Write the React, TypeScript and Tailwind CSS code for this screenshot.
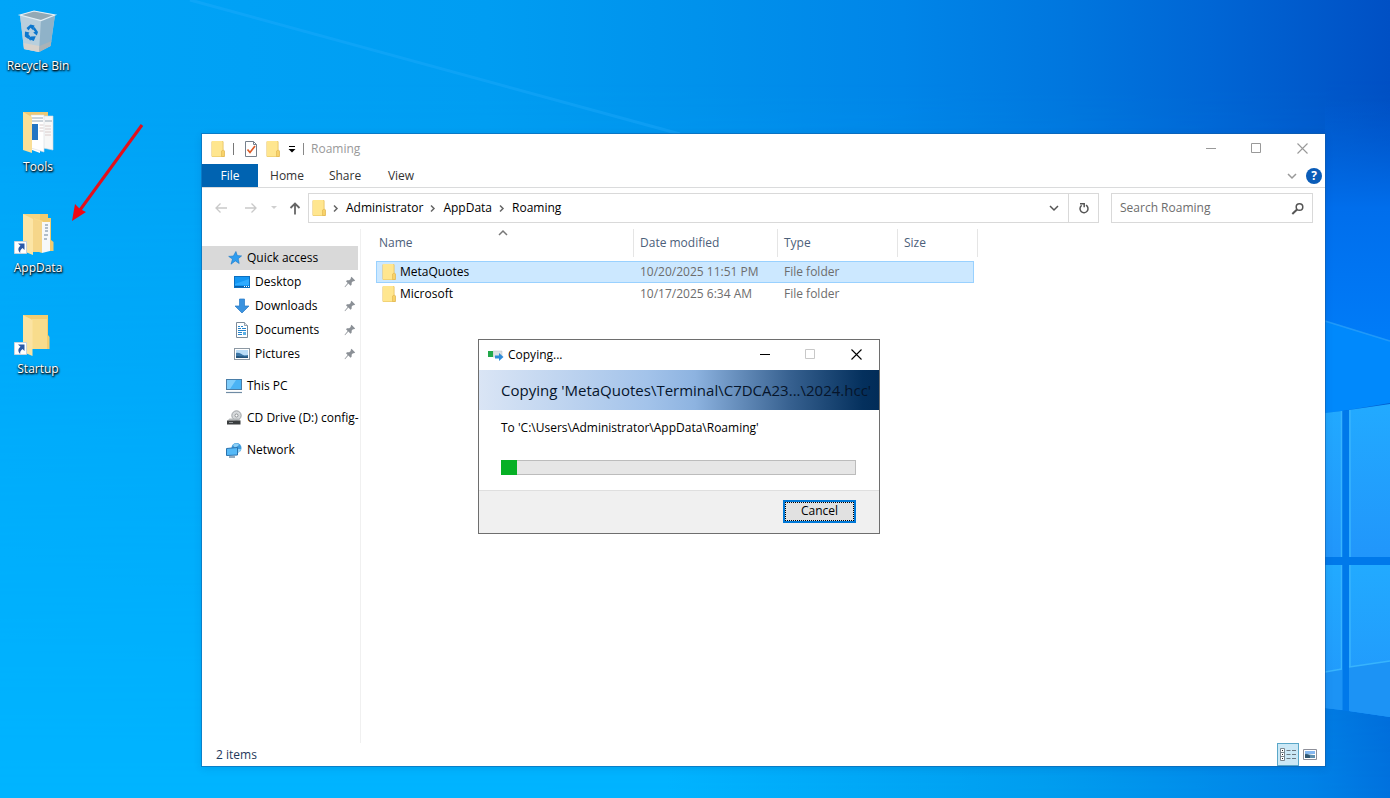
import React, { useState } from 'react';

const font = "font-['Open_Sans','Noto_Sans',sans-serif]";

const FolderIcon = () => (
  <svg width="14" height="18" viewBox="0 0 14 18" className="shrink-0">
    <path d="M1 1.500h11v9l1 1v5H1z" fill="#fbdd7c" stroke="#e6bf5c" />
    <path d="M1 1h10.500v15.500H1z" fill="#ffe68f" />
    <path d="M10.500 16.500V11l2-1 1 1v5.500z" fill="#f8d269" stroke="#dfb450" strokeWidth=".6" />
  </svg>
);

const PinIcon = () => (
  <svg width="12" height="12" viewBox="0 0 12 12" className="shrink-0">
    <path d="M7.500.8 11.200 4.500 10 5.300 9 5.200 7.700 6.600 7.600 8.800 6.500 9.700 4.400 7.600 1 11.200 .6 10.800 3.700 6.900 2 5.200 3 4.300 5.200 4.200 6.700 3 6.700 1.900z" fill="#8b9096" />
  </svg>
);

const StarIcon = () => (
  <svg width="16" height="16" viewBox="0 0 16 16">
    <path d="M8.900 1.500 10.300 5.600 14.600 5.900 11.200 8.700 12.200 13.500 8.300 10.900 4 14.200 5.500 9 1.700 6.400 6.400 6z" fill="#2e9df0" stroke="#1577c8" strokeWidth=".6" />
  </svg>
);

const DesktopIcon = () => (
  <svg width="16" height="16" viewBox="0 0 16 16">
    <rect x=".5" y="2.500" width="15" height="11" fill="#1497f3" stroke="#0b6fc0" />
    <path d="M1 10 15 5v6H1z" fill="#2fabff" />
    <path d="M1 12h14v1H1z" fill="#0a5ea8" />
    <path d="M10 12.500h1m1 0h1m1 0h1" stroke="#fff" strokeWidth="1" />
  </svg>
);

const DownloadsIcon = () => (
  <svg width="16" height="16" viewBox="0 0 16 16">
    <path d="M5.500 1h5v7H15l-7 7-7-7h4.500z" fill="#3b93df" stroke="#2579c5" strokeWidth=".7" />
  </svg>
);

const DocumentsIcon = () => (
  <svg width="16" height="16" viewBox="0 0 16 16">
    <path d="M2.500.5h8l3 3v12h-11z" fill="#fff" stroke="#7c8b99" />
    <path d="M10.500.5v3h3" fill="#dfe6ec" stroke="#7c8b99" strokeWidth=".8" />
    <path d="M4 4.500h2m1 0h2M4 6.500h3m1 0h4M4 8.500h8M4 10.500h4M4 12.500h4" stroke="#2583cb" />
    <path d="M9 10h3v3H9z" fill="#5bb0e6" />
  </svg>
);

const PicturesIcon = () => (
  <svg width="16" height="16" viewBox="0 0 16 16">
    <rect x=".5" y="2.500" width="15" height="11" fill="#fff" stroke="#8c98a3" />
    <path d="M2 4h12v8H2z" fill="#b9dcf7" />
    <path d="M2 7c3-1 5 1 7 2s4 0 5 0v3H2z" fill="#3e78a8" />
    <path d="M2 10c3 0 6 .5 12 .5V12H2z" fill="#23547c" />
  </svg>
);

const ComputerIcon = () => (
  <svg width="16" height="16" viewBox="0 0 16 16">
    <rect x=".5" y="1.500" width="15" height="10" fill="#4bb3f5" stroke="#4a7ea8" />
    <path d="M1 2h9L4 11H1z" fill="#7fcdfb" />
    <path d="M0 14.500h16" stroke="#6f8ba4" strokeWidth="1.200" />
  </svg>
);

const DiscDriveIcon = () => (
  <svg width="16" height="16" viewBox="0 0 16 16">
    <circle cx="10.500" cy="5.500" r="4.700" fill="#d6d9db" stroke="#8d9295" strokeWidth=".8" />
    <circle cx="10.500" cy="5.500" r="1.500" fill="#fff" stroke="#84898c" strokeWidth=".9" />
    <path d="M3.500 8.500h9l2 2H1.500z" fill="#b4b8ba" />
    <path d="M1 10.500h13.500v4H1z" fill="#3a3d3f" />
    <path d="M3 12.500h4" stroke="#a6abad" strokeWidth=".8" />
  </svg>
);

const NetworkIcon = () => (
  <svg width="16" height="16" viewBox="0 0 16 16">
    <circle cx="10.500" cy="6" r="5" fill="#3f9bdc" />
    <path d="M7 3c2-2 5-2 6 0L9 6zM12 7l3 0-1 3-2 0z" fill="#8fd0f5" />
    <path d="M.5 6.500 11.500 5.500V13L.5 13.500z" fill="#55b9f7" stroke="#2a72ae" />
    <path d="M3 15h6" stroke="#4b7598" strokeWidth="1.200" />
  </svg>
);

const CheckPageIcon = () => (
  <svg width="14" height="16" viewBox="0 0 14 16" className="shrink-0">
    <path d="M1.500.5h8l3 3v12h-11z" fill="#fff" stroke="#76808c" />
    <path d="M9.500.5v3h3" fill="none" stroke="#76808c" />
    <path d="m3.500 8.500 2.500 3 5-6.500" fill="none" stroke="#dd5a26" strokeWidth="1.700" />
  </svg>
);

const Chevron = ({ className }: { className?: string }) => (
  <svg width="12" height="12" viewBox="0 0 12 12" fill="none" stroke="currentColor" strokeWidth="1.500" className={className}>
    <path d="m2 4 4 4 4-4" />
  </svg>
);

const CrumbArrow = () => (
  <svg width="12" height="12" viewBox="0 0 12 12" fill="none" stroke="#666" strokeWidth="1.500" className="mx-1 shrink-0">
    <path d="m4 3.500 3 3-3 3" />
  </svg>
);

const RecycleBin = () => (
  <svg width="42" height="44" viewBox="0 0 42 44">
    <path d="M3 6 17 2l21 4-4.500 31L22 43 7 40z" fill="#b6cddb" />
    <path d="M3 6 24 11.500 22 43 7 40z" fill="#b9cfdd" />
    <path d="M24 11.500 38 6l-4.500 31L22 43z" fill="#8fb2c8" />
    <path d="M3 6 17 2l21 4-14 5.500z" fill="#93a9b5" stroke="#e4eff5" strokeWidth="1.200" />
    <path d="M6.500 34 22.500 37 22 43 7 40z" fill="#d8d2cc" />
    <path d="m22.500 37 12-5-1 5L22 43z" fill="#a9b3b8" />
    <g fill="#0c77ce">
      <path d="m9.500 19 4-3.500 4 1-1.500 4.500-2.500-2.200-2 2.700z" />
      <path d="m17.500 18 3.500 5-1.200 3.500-3.600-3 1.800-.8-2.200-2.600z" />
      <path d="M8 22.500l4.500 1-1.200 1.400 2 2.600-2 2.500-3.500-2.500z" />
      <path d="m14 27.500 4.800-.2-2 4.700-3.300-1.200-.2 1.200-2-3z" />
    </g>
  </svg>
);

const ShortcutBadge = () => (
  <g>
    <path d="M.5 30.500h12v12H.5z" fill="#fff" stroke="#c9d3dc" />
    <path d="M4 32.500h6.500V39L8.500 37C6.500 38.500 6 40 6.200 42 3.500 39.500 4 36.500 6.500 34.800z" fill="#2c5aa8" />
  </g>
);

const ToolsFolder = () => (
  <svg width="48" height="44" viewBox="0 0 48 44">
    <path d="M9 2h25v34H9z" fill="#eec973" />
    <path d="M18 9 26 12v31l-8-3z" fill="#fff" />
    <path d="M29 6h10v34l-10-2z" fill="#f7f7f7" stroke="#d2d8dd" strokeWidth=".6" />
    <path d="M17 5h13v37l-13-4z" fill="#fff" stroke="#d7dbe0" strokeWidth=".6" />
    <path d="M18 8h11M18 11h11M31 11h7" stroke="#8d9eae" strokeWidth=".9" />
    <path d="M18 14h6v16h-6z" fill="#2375c4" />
    <path d="M25.500 15h4M25.500 18h4M25.500 21h4M31 16h6M31 19h6M31 22h6M31 25h6" stroke="#d5c6c6" strokeWidth=".9" />
    <path d="M9 2l9 5v36l-9-3z" fill="#fadf97" />
  </svg>
);

const AppDataFolder = () => (
  <svg width="48" height="44" viewBox="0 0 48 44">
    <path d="M9 3h25v4h3v22l2.500 2v9H22z" fill="#f1cb6e" />
    <path d="M9 3h17v38H9z" fill="#f5d583" />
    <path d="M20 7l9 3v31l-9-2z" fill="#f8da8b" />
    <path d="M28 11h8v29l-8 2z" fill="#f6f8fa" />
    <path d="M31 14h3M31 17h3M31 20h3M30 24h4M30 28h3" stroke="#6c8197" strokeWidth="1.200" />
    <path d="M9 3l10 5v36l-10-4z" fill="#fce5a6" />
    <path d="M19 8l9 3v31l-9-3z" fill="#f6d68a" />
    <ShortcutBadge />
  </svg>
);

const StartupFolder = () => (
  <svg width="48" height="44" viewBox="0 0 48 44">
    <path d="M9 3h25v20l1.500 2v12H18z" fill="#f3cd70" />
    <path d="M18 7h15v30H18z" fill="#f8dc8c" />
    <path d="M9 3l9.500 5v36L9 40z" fill="#fbe3a2" />
    <ShortcutBadge />
  </svg>
);

const desktopIcons = [
  { label: 'Recycle Bin', icon: RecycleBin },
  { label: 'Tools', icon: ToolsFolder },
  { label: 'AppData', icon: AppDataFolder },
  { label: 'Startup', icon: StartupFolder },
];

const quickLinks = [
  { label: 'Desktop', icon: DesktopIcon },
  { label: 'Downloads', icon: DownloadsIcon },
  { label: 'Documents', icon: DocumentsIcon },
  { label: 'Pictures', icon: PicturesIcon },
];

const places = [
  { label: 'This PC', icon: ComputerIcon },
  { label: 'CD Drive (D:) config-', icon: DiscDriveIcon },
  { label: 'Network', icon: NetworkIcon },
];

const files = [
  { name: 'MetaQuotes', date: '10/20/2025 11:51 PM', type: 'File folder' },
  { name: 'Microsoft', date: '10/17/2025 6:34 AM', type: 'File folder' },
];

const WindowButtons = ({ disabledMax = false }: { disabledMax?: boolean }) => (
  <div className="flex h-[28px] shrink-0 self-start">
    <button aria-label="Minimize" className="flex w-[46px] items-center justify-center">
      <svg width="11" height="11" viewBox="0 0 11 11"><path d="M0 5.500h10" stroke="currentColor" /></svg>
    </button>
    <button aria-label="Maximize" disabled={disabledMax} className={`flex w-[45px] items-center justify-center ${disabledMax ? 'text-[#c8c8c8]' : ''}`}>
      <svg width="11" height="11" viewBox="0 0 11 11"><path d="M.5.5h9v9h-9z" fill="none" stroke="currentColor" /></svg>
    </button>
    <button aria-label="Close" className="flex w-[46px] items-center justify-center">
      <svg width="11" height="11" viewBox="0 0 11 11"><path d="m.5.5 10 10M10.500.5l-10 10" stroke="currentColor" strokeWidth="1.100" /></svg>
    </button>
  </div>
);

const Wallpaper = () => (
  <svg className="absolute inset-0 h-full w-full" viewBox="0 0 1390 798" preserveAspectRatio="none">
    <defs>
      <linearGradient id="top" x1="0" x2="1">
        <stop offset="0" stopColor="#00a5f8" />
        <stop offset=".35" stopColor="#009df2" />
        <stop offset=".5" stopColor="#0092ec" />
        <stop offset=".65" stopColor="#0085e8" />
        <stop offset=".77" stopColor="#0076de" />
        <stop offset=".87" stopColor="#0066d5" />
        <stop offset="1" stopColor="#0050c4" />
      </linearGradient>
      <linearGradient id="bottom" x1="0" x2="1">
        <stop offset="0" stopColor="#00b4ff" />
        <stop offset=".48" stopColor="#00b4ff" />
        <stop offset=".75" stopColor="#009eef" />
        <stop offset=".94" stopColor="#0084e8" />
        <stop offset="1" stopColor="#0072de" />
      </linearGradient>
      <linearGradient id="fade" x1="0" x2="0" y1="0" y2="1">
        <stop offset=".1" stopColor="#fff" stopOpacity="0" />
        <stop offset="1" stopColor="#fff" />
      </linearGradient>
      <linearGradient id="pane" x1="0" x2="0" y1="0" y2="1">
        <stop offset="0" stopColor="#22aaff" />
        <stop offset="1" stopColor="#2196fb" />
      </linearGradient>
      <linearGradient id="glow" x1="0" x2="0" y1="0" y2="1">
        <stop offset="0" stopColor="#0062dc" stopOpacity="0" />
        <stop offset=".45" stopColor="#006eec" />
        <stop offset="1" stopColor="#007cf8" />
      </linearGradient>
      <mask id="lower"><path d="M0 0h1390v798H0z" fill="url(#fade)" /></mask>
    </defs>
    <path d="M0 0h1390v798H0z" fill="url(#top)" />
    <path d="M0 0h1390v798H0z" fill="url(#bottom)" mask="url(#lower)" />
    <path d="m190 0 490 134" stroke="#2bb0ff" strokeWidth="3" opacity=".3" />
    <path d="M1325 100h65v241l-65-20z" fill="url(#glow)" />
    <path d="m1325 321 65 20v62l-65 11z" fill="#0089fc" />
    <path d="m1325 321 65 20" stroke="#2fa5fb" strokeWidth="1.500" opacity=".7" />
    <path d="m1325 413 65-8v312l-65-9z" fill="#0079ea" />
    <path d="m1325 413 17-2v146h-17zM1349 410l41-6v153h-41z" fill="url(#pane)" />
    <path d="M1325 565h17v145l-17-2zM1349 565h41v152l-41-6z" fill="url(#pane)" />
    <path d="M1341.500 411v146M1350 410v147M1341.500 565v145M1350 565v146" stroke="#38b4fd" strokeWidth="1.500" />
    <path d="m1325 672 17-3v41l-17-2zM1349 667l41-6v56l-41-6z" fill="#1c93f5" />
    <path d="m1325 672 17-3M1349 667l41-6" stroke="#38b4fd" strokeWidth="1.500" />
  </svg>
);

const Explorer = () => {
  const [selected, setSelected] = useState('MetaQuotes');

  return (
    <section className="absolute top-[134px] right-[65px] bottom-8 left-[202px] flex flex-col bg-white text-black shadow-[0_0_0_1px_rgba(20,90,160,0.5),0_2px_8px_rgba(0,40,100,0.15)]">
      {/* Title bar */}
      <header className="flex h-[30px] items-center text-[#999]">
        <div className="flex flex-1 items-center pl-[9px]">
          <FolderIcon />
          <span className="ml-2 h-3 w-px bg-[#777]" />
          <button aria-label="Properties" className="ml-2.5"><CheckPageIcon /></button>
          <button aria-label="New folder" className="ml-2"><FolderIcon /></button>
          <button aria-label="Customize toolbar" className="ml-2 text-black">
            <svg width="8" height="8" viewBox="0 0 8 8"><path d="M1 1.500h6" stroke="currentColor" /><path d="M.5 4h7L4 7.500z" fill="currentColor" /></svg>
          </button>
          <span className="ml-[7px] h-3 w-px bg-[#888]" />
          <h1 className="ml-[7px]">Roaming</h1>
        </div>
        <WindowButtons />
      </header>

      {/* Ribbon tabs */}
      <nav className="flex h-6 items-center border-b border-[#dadbdc] text-[#333]">
        <button className="h-full w-14 bg-[#0063b1] text-white">File</button>
        <button className="h-full w-[58px]">Home</button>
        <button className="h-full w-[58px]">Share</button>
        <button className="h-full w-[54px]">View</button>
        <div className="ml-auto flex items-center gap-2 pr-[3px]">
          <Chevron className="text-[#999]" />
          <button aria-label="Help" className="h-4 w-4 rounded-full bg-[#0a5cb8] text-xs leading-4 font-bold text-white">?</button>
        </div>
      </nav>

      {/* Address bar */}
      <div className="flex items-center px-3 pt-[5px] pb-1.5">
        <button aria-label="Back" className="w-[30px] text-[#c9c9c9]">
          <svg width="14" height="12" viewBox="0 0 14 12" fill="none" stroke="currentColor" strokeWidth="1.300"><path d="M13 6H2M6.500 1.500 2 6l4.500 4.500" /></svg>
        </button>
        <button aria-label="Forward" className="w-[26px] text-[#c9c9c9]">
          <svg width="14" height="12" viewBox="0 0 14 12" fill="none" stroke="currentColor" strokeWidth="1.300"><path d="M1 6h11M7.500 1.500 12 6l-4.500 4.500" /></svg>
        </button>
        <button aria-label="Recent locations" className="w-[18px] text-[#cfcfcf]">
          <svg width="8" height="6" viewBox="0 0 8 6"><path d="M1 1h6L4 4z" fill="currentColor" /></svg>
        </button>
        <button aria-label="Up" className="w-5 text-[#666]">
          <svg width="14" height="14" viewBox="0 0 14 14" fill="none" stroke="currentColor" strokeWidth="1.800"><path d="M7 13.500V3M2.500 7 7 2.500 11.500 7" /></svg>
        </button>
        <div className="flex h-[30px] flex-1 items-center border border-[#d9d9d9] pl-[3px]">
          <FolderIcon />
          {['Administrator', 'AppData', 'Roaming'].map((part) => (
            <React.Fragment key={part}>
              <CrumbArrow />
              <button>{part}</button>
            </React.Fragment>
          ))}
          <button aria-label="Previous locations" className="mr-2 ml-auto text-[#555]">
            <Chevron />
          </button>
          <button aria-label="Refresh" className="flex h-full w-[30px] items-center justify-center border-l border-[#d9d9d9] text-[#555]">
            <svg width="12" height="12" viewBox="0 0 12 12" fill="none" stroke="currentColor" strokeWidth="1.500"><path d="M8 3.200a4 4 0 1 1-4.300.2M2 1.700h4.200v3.600" /></svg>
          </button>
        </div>
        <label className="ml-3 flex h-[30px] w-[202px] items-center border border-[#d9d9d9] px-2 text-[#555]">
          <input type="search" aria-label="Search Roaming" placeholder="Search Roaming" className="w-full min-w-0 flex-1 outline-none placeholder:text-[#6d6d6d]" />
          <svg width="13" height="13" viewBox="0 0 13 13" fill="none" stroke="currentColor" strokeWidth="1.500"><circle cx="8.500" cy="5" r="3.300" /><path d="M6 7.500 1.300 12" strokeWidth="2" /></svg>
        </label>
      </div>

      <div className="flex min-h-0 flex-1">
        {/* Navigation pane */}
        <aside className="flex w-[159px] shrink-0 flex-col border-r border-[#f0f0f0] pt-[17px] pr-0.5">
          <button className="flex h-6 items-center gap-1 bg-[#d9d9d9] pl-[25px]">
            <StarIcon />
            Quick access
          </button>
          {quickLinks.map((item) => (
            <button key={item.label} className="flex h-6 items-center gap-[5px] pr-0.5 pl-8">
              <item.icon />
              <span className="flex-1 text-left">{item.label}</span>
              <PinIcon />
            </button>
          ))}
          {places.map((item) => (
            <button key={item.label} className="mt-2 flex h-6 items-center gap-[5px] pl-6 whitespace-nowrap">
              <span className="shrink-0"><item.icon /></span>
              {item.label}
            </button>
          ))}
        </aside>

        {/* File list */}
        <main className="min-w-0 flex-1 pl-[15px]">
          <table className="w-[598px] table-fixed border-collapse text-left">
            <thead className="text-[#4c607a]">
              <tr>
                <th className="h-8 w-[258px] p-0 align-top font-normal">
                  <div className="relative flex h-7 items-center border-r border-[#e5e5e5] pl-[3px]">
                    Name
                    <Chevron className="absolute top-[-2px] left-[121px] rotate-180 text-[#777]" />
                  </div>
                </th>
                <th className="w-36 p-0 align-top font-normal">
                  <div className="flex h-7 items-center border-r border-[#e5e5e5] pl-1.5">Date modified</div>
                </th>
                <th className="w-[120px] p-0 align-top font-normal">
                  <div className="flex h-7 items-center border-r border-[#e5e5e5] pl-1.5">Type</div>
                </th>
                <th className="p-0 align-top font-normal">
                  <div className="flex h-7 w-20 items-center border-r border-[#e5e5e5] pl-1.5">Size</div>
                </th>
              </tr>
            </thead>
            <tbody>
              {files.map((file) => (
                <tr
                  key={file.name}
                  onClick={() => setSelected(file.name)}
                  className={`h-[22px] text-[#6d6d6d] ${
                    selected === file.name ? 'bg-[#cce8ff] outline outline-[#99d1ff] -outline-offset-1' : ''
                  }`}
                >
                  <td className="p-0">
                    <div className="flex items-center gap-1 pl-1.5 text-black">
                      <FolderIcon />
                      {file.name}
                    </div>
                  </td>
                  <td className="p-0 pl-1.5">{file.date}</td>
                  <td className="p-0 pl-1.5">{file.type}</td>
                  <td />
                </tr>
              ))}
            </tbody>
          </table>
        </main>
      </div>

      {/* Status bar */}
      <footer className="flex h-[23px] items-center pl-3.5 text-[#1e395b]">
        2 items
        <div className="mr-2 ml-auto flex h-full items-center gap-1">
          <button aria-label="Details view" className="flex h-full w-[22px] items-center justify-center border border-[#5aa7c8] bg-[#cbe8f6]">
            <svg width="16" height="14" viewBox="0 0 16 14" fill="none">
              <path d="M.5.5h4v12h-4zM.5 4.500h4M.5 8.500h4" fill="#fff" stroke="#7b868e" />
              <path d="M2 2.500h1M2 6.500h1M2 10.500h1" stroke="#222" />
              <path d="M6.500 2.500h4M6.500 6.500h4M6.500 10.500h4M12 2.500h4M12 6.500h4M12 10.500h4" stroke="#6c7880" />
            </svg>
          </button>
          <button aria-label="Large icons view">
            <svg width="14" height="12" viewBox="0 0 14 12">
              <path d="M.5.5h13v10H.5z" fill="#fff" stroke="#8d8f99" />
              <path d="M2 2h10v3H2z" fill="#86b8f0" />
              <path d="M2 5c3-1 5 1.500 10 1v3H2z" fill="#5f8fae" />
              <path d="M2 5.500c2-.5 3 .5 5 1V9H2z" fill="#2f5570" />
            </svg>
          </button>
        </div>
      </footer>
    </section>
  );
};

const CopyDialog = ({ progress }: { progress: number }) => (
  <section role="dialog" aria-label="Copying" className="absolute top-[339px] left-[478px] w-[402px] border border-[#6e6e6e] bg-white text-black">
    <header className="flex h-[30px] items-center pl-[9px]">
      <svg width="16" height="12" viewBox="0 0 16 12">
        <path d="M5 2h9v6H5z" fill="#dce1e4" stroke="#b9c0c5" strokeWidth=".5" />
        <path d="M0 2h5v6H0z" fill="#22a84a" />
        <path d="M7 6.500h4V4l4.500 4L11 12V9.500H7z" fill="#2f8bd8" />
      </svg>
      <span className="flex-1 pl-1">Copying...</span>
      <WindowButtons disabledMax />
    </header>
    <h2 className="h-10 bg-[linear-gradient(90deg,#dae5f5_0%,#a3c3ea_42%,#8db3e0_54%,#36608f_78%,#04305d_96%,#022c58_100%)] pl-[22px] text-[15px] leading-10 whitespace-nowrap text-[#06152b]">
      Copying 'MetaQuotes\Terminal\C7DCA23...\2024.hcc'
    </h2>
    <div className="h-20 pt-2 pr-[23px] pl-[22px]">
      <p className="leading-5">To 'C:\Users\Administrator\AppData\Roaming'</p>
      <div role="progressbar" aria-valuenow={progress} className="mt-[22px] h-[15px] border border-[#bcbcbc] bg-[#e6e6e6]">
        <div className="-mt-px -ml-px h-[15px] bg-[#06b025]" style={{ width: `${progress}%` }} />
      </div>
    </div>
    <footer className="flex h-[43px] items-center justify-end border-t border-[#dfdfdf] bg-[#f0f0f0] pr-[23px] pb-0.5">
      <button className="h-[23px] w-[73px] border-2 border-[#0078d7] bg-[#e1e1e1] outline-1 -outline-offset-3 outline-black outline-dotted">Cancel</button>
    </footer>
  </section>
);

const App: React.FC = () => {
  return (
    <div className={`relative h-screen overflow-hidden bg-[#009df2] text-xs ${font}`}>
      <Wallpaper />

      {/* Desktop shortcuts */}
      <div className="absolute top-[9px] left-0 flex w-[76px] flex-col gap-9">
        {desktopIcons.map((item) => (
          <button key={item.label} className="flex h-[65px] flex-col items-center justify-between text-white [text-shadow:1px_1px_2px_#000,0_1px_2px_#000]">
            <item.icon />
            {item.label}
          </button>
        ))}
      </div>

      <svg className="absolute top-[120px] left-[66px]" width="82" height="106" viewBox="0 0 82 106">
        <path d="M76 5 14 90" stroke="#e3101c" strokeWidth="3" />
        <path d="M6 101 9 84l5 5 6 3z" fill="#f00812" />
      </svg>

      <Explorer />
      <CopyDialog progress={4.5} />
    </div>
  );
};

export default App;
